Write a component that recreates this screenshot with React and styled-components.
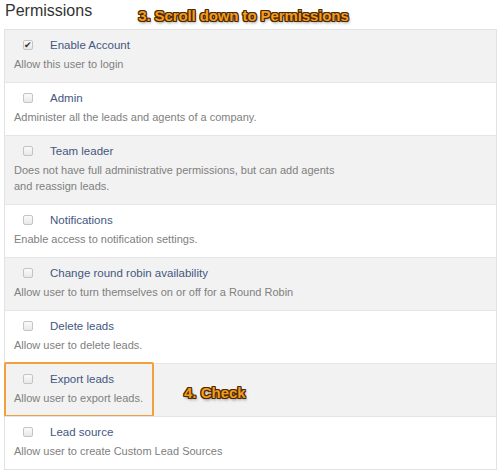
import React from 'react';
import styled, { createGlobalStyle } from 'styled-components';

const GlobalStyle = createGlobalStyle`
  body {
    margin: 0;
    background: #ffffff;
    font-family: "Helvetica Neue", "Liberation Sans", Arial, sans-serif;
  }
`;

const permissions = [
  { title: 'Enable Account', text: 'Allow this user to login', checked: true },
  { title: 'Admin', text: 'Administer all the leads and agents of a company.' },
  {
    title: 'Team leader',
    text: 'Does not have full administrative permissions, but can add agents and reassign leads.',
  },
  { title: 'Notifications', text: 'Enable access to notification settings.' },
  { title: 'Change round robin availability', text: 'Allow user to turn themselves on or off for a Round Robin' },
  { title: 'Delete leads', text: 'Allow user to delete leads.' },
  { title: 'Export leads', text: 'Allow user to export leads.', highlight: true },
  { title: 'Lead source', text: 'Allow user to create Custom Lead Sources' },
];

const App = () => {
  return (
    <Page>
      <GlobalStyle />
      <Header>
        <Title>Permissions</Title>
        <Callout>3. Scroll down to Permissions</Callout>
      </Header>
      <Table>
        {permissions.map((p, i) => (
          <Row key={p.title} $striped={i % 2 === 0}>
            {p.highlight && (
              <>
                <Highlight />
                <StepNote>4. Check</StepNote>
              </>
            )}
            <Label>
              <Check type="checkbox" defaultChecked={p.checked} />
              <span>{p.title}</span>
            </Label>
            <Desc>{p.text}</Desc>
          </Row>
        ))}
      </Table>
    </Page>
  );
};

const Page = styled.div`
  width: 500px;
  height: 471px;
  overflow: hidden;
  padding: 0 3px 0 4px;
  box-sizing: border-box;
`;

const Header = styled.div`
  display: flex;
  align-items: flex-start;
  height: 29px;
  padding: 1px 0 0 1px;
  box-sizing: border-box;
  gap: 46px;
`;

const Title = styled.h3`
  margin: 0;
  font-size: 16px;
  line-height: 20px;
  font-weight: normal;
  color: #333;
`;

const annotation = `
  font-family: "Liberation Sans", Arial, sans-serif;
  font-weight: bold;
  font-size: 15px;
  color: #f39c1e;
  text-shadow:
    -1px -1px 0 #4a2a05, 1px -1px 0 #4a2a05, -1px 1px 0 #4a2a05, 1px 1px 0 #4a2a05,
    0 1px 0 #4a2a05, 0 -1px 0 #4a2a05, 1px 0 0 #4a2a05, -1px 0 0 #4a2a05,
    1px 2px 3px rgba(0, 0, 0, 0.5);
`;

const Callout = styled.div`
  ${annotation}
  line-height: 20px;
  margin-top: 5px;
  letter-spacing: -0.1px;
`;

const Table = styled.div`
  border: 1px solid #e2e2e2;
  display: flex;
  flex-direction: column;
`;

const Row = styled.div`
  position: relative;
  background: ${(p) => (p.$striped ? '#f2f2f2' : '#ffffff')};
  border-top: 1px solid #e6e6e6;
  padding: 7px 10px 10px 9px;
  &:first-child {
    border-top: none;
  }
`;

const Label = styled.label`
  display: flex;
  align-items: center;
  gap: 17px;
  padding-left: 9px;
  height: 16px;
  font-size: 11.5px;
  color: #44577f;
`;

const Check = styled.input`
  appearance: none;
  width: 10px;
  height: 10px;
  margin: 0;
  border: 1px solid #c4c4c4;
  border-radius: 2px;
  background: linear-gradient(#fbfbfb, #e8e8e8);
  display: grid;
  place-items: center;
  &:checked::after {
    content: '✔';
    font-size: 9px;
    line-height: 1;
    color: #333;
  }
`;

const Desc = styled.div`
  margin-top: 3px;
  font-size: 11px;
  line-height: 16px;
  color: #808080;
  max-width: 330px;
`;

const Highlight = styled.div`
  position: absolute;
  left: -1px;
  top: -2px;
  bottom: -1px;
  width: 146px;
  border: 2px solid #f1a03e;
  border-radius: 2px;
  pointer-events: none;
`;

const StepNote = styled.div`
  ${annotation}
  position: absolute;
  left: 179px;
  top: 20px;
`;

export default App;
